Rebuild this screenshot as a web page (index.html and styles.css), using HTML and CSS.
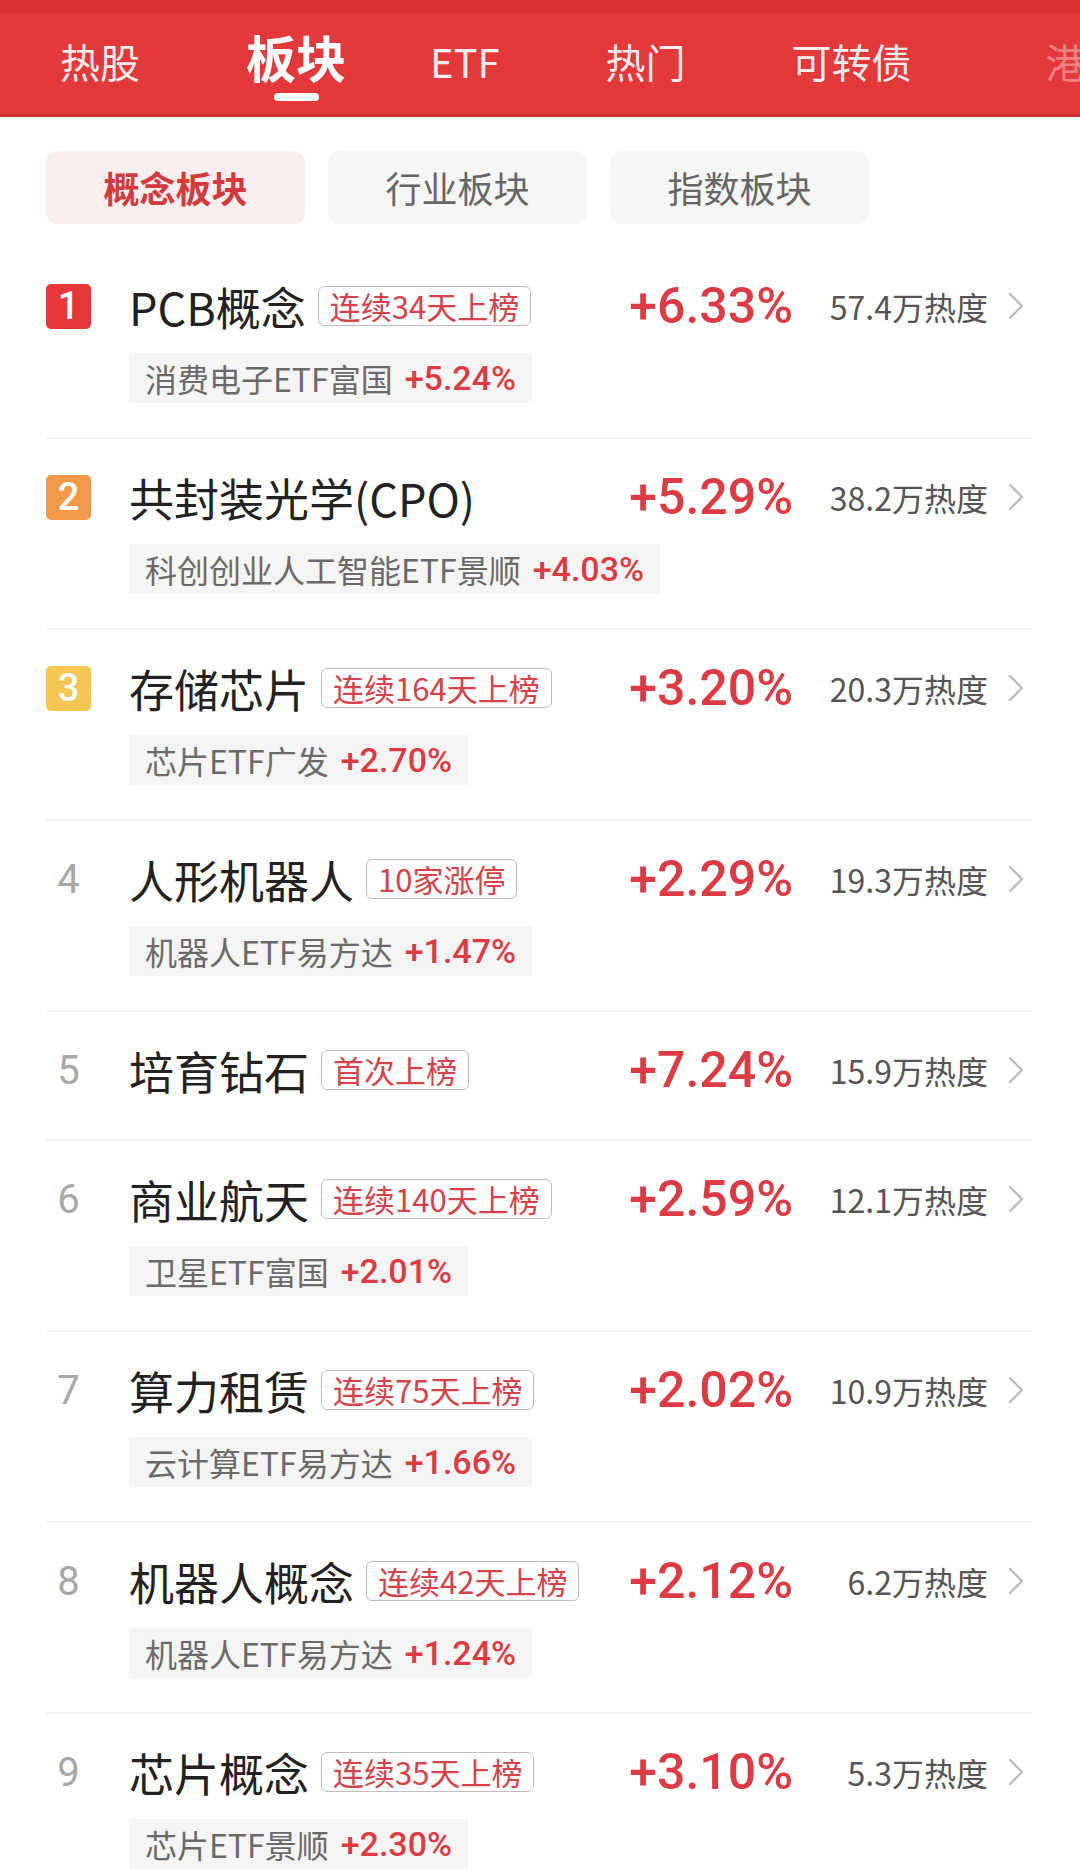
FILE: index.html
```html
<!DOCTYPE html>
<html lang="zh-CN">
<head>
    <meta charset="UTF-8">
    <meta name="viewport" content="width=device-width, initial-scale=1.0">
    <title>板块热榜</title>
    <link rel="stylesheet" href="styles.css">
</head>
<body>
    <div class="topbar">
        <div class="tab">热股</div>
        <div class="tab active">板块</div>
        <div class="tab tab-etf">ETF</div>
        <div class="tab">热门</div>
        <div class="tab">可转债</div>
        <div class="tab tab-fade">港</div>
    </div>

    <div class="segments">
        <div class="segment active">概念板块</div>
        <div class="segment">行业板块</div>
        <div class="segment">指数板块</div>
    </div>

    <div class="list">
        <div class="row">
            <div class="main">
                <span class="rank rank-1">1</span>
                <span class="name">PCB概念</span>
                <span class="tag">连续34天上榜</span>
                <span class="pct">+6.33%</span>
                <span class="heat">57.4万热度</span>
                <span class="arrow"><svg viewBox="0 0 18 30" width="18" height="30"><path d="M3 3 L15 15 L3 27" fill="none" stroke="#bdbdbd" stroke-width="2.4" stroke-linecap="round" stroke-linejoin="round"/></svg></span>
            </div>
            <div class="chip"><span class="chip-name">消费电子ETF富国</span><span class="chip-pct">+5.24%</span></div>
        </div>

        <div class="row">
            <div class="main">
                <span class="rank rank-2">2</span>
                <span class="name">共封装光学(CPO)</span>
                <span class="pct">+5.29%</span>
                <span class="heat">38.2万热度</span>
                <span class="arrow"><svg viewBox="0 0 18 30" width="18" height="30"><path d="M3 3 L15 15 L3 27" fill="none" stroke="#bdbdbd" stroke-width="2.4" stroke-linecap="round" stroke-linejoin="round"/></svg></span>
            </div>
            <div class="chip"><span class="chip-name">科创创业人工智能ETF景顺</span><span class="chip-pct">+4.03%</span></div>
        </div>

        <div class="row">
            <div class="main">
                <span class="rank rank-3">3</span>
                <span class="name">存储芯片</span>
                <span class="tag">连续164天上榜</span>
                <span class="pct">+3.20%</span>
                <span class="heat">20.3万热度</span>
                <span class="arrow"><svg viewBox="0 0 18 30" width="18" height="30"><path d="M3 3 L15 15 L3 27" fill="none" stroke="#bdbdbd" stroke-width="2.4" stroke-linecap="round" stroke-linejoin="round"/></svg></span>
            </div>
            <div class="chip"><span class="chip-name">芯片ETF广发</span><span class="chip-pct">+2.70%</span></div>
        </div>

        <div class="row">
            <div class="main">
                <span class="rank">4</span>
                <span class="name">人形机器人</span>
                <span class="tag">10家涨停</span>
                <span class="pct">+2.29%</span>
                <span class="heat">19.3万热度</span>
                <span class="arrow"><svg viewBox="0 0 18 30" width="18" height="30"><path d="M3 3 L15 15 L3 27" fill="none" stroke="#bdbdbd" stroke-width="2.4" stroke-linecap="round" stroke-linejoin="round"/></svg></span>
            </div>
            <div class="chip"><span class="chip-name">机器人ETF易方达</span><span class="chip-pct">+1.47%</span></div>
        </div>

        <div class="row">
            <div class="main">
                <span class="rank">5</span>
                <span class="name">培育钻石</span>
                <span class="tag">首次上榜</span>
                <span class="pct">+7.24%</span>
                <span class="heat">15.9万热度</span>
                <span class="arrow"><svg viewBox="0 0 18 30" width="18" height="30"><path d="M3 3 L15 15 L3 27" fill="none" stroke="#bdbdbd" stroke-width="2.4" stroke-linecap="round" stroke-linejoin="round"/></svg></span>
            </div>
        </div>

        <div class="row">
            <div class="main">
                <span class="rank">6</span>
                <span class="name">商业航天</span>
                <span class="tag">连续140天上榜</span>
                <span class="pct">+2.59%</span>
                <span class="heat">12.1万热度</span>
                <span class="arrow"><svg viewBox="0 0 18 30" width="18" height="30"><path d="M3 3 L15 15 L3 27" fill="none" stroke="#bdbdbd" stroke-width="2.4" stroke-linecap="round" stroke-linejoin="round"/></svg></span>
            </div>
            <div class="chip"><span class="chip-name">卫星ETF富国</span><span class="chip-pct">+2.01%</span></div>
        </div>

        <div class="row">
            <div class="main">
                <span class="rank">7</span>
                <span class="name">算力租赁</span>
                <span class="tag">连续75天上榜</span>
                <span class="pct">+2.02%</span>
                <span class="heat">10.9万热度</span>
                <span class="arrow"><svg viewBox="0 0 18 30" width="18" height="30"><path d="M3 3 L15 15 L3 27" fill="none" stroke="#bdbdbd" stroke-width="2.4" stroke-linecap="round" stroke-linejoin="round"/></svg></span>
            </div>
            <div class="chip"><span class="chip-name">云计算ETF易方达</span><span class="chip-pct">+1.66%</span></div>
        </div>

        <div class="row">
            <div class="main">
                <span class="rank">8</span>
                <span class="name">机器人概念</span>
                <span class="tag">连续42天上榜</span>
                <span class="pct">+2.12%</span>
                <span class="heat">6.2万热度</span>
                <span class="arrow"><svg viewBox="0 0 18 30" width="18" height="30"><path d="M3 3 L15 15 L3 27" fill="none" stroke="#bdbdbd" stroke-width="2.4" stroke-linecap="round" stroke-linejoin="round"/></svg></span>
            </div>
            <div class="chip"><span class="chip-name">机器人ETF易方达</span><span class="chip-pct">+1.24%</span></div>
        </div>

        <div class="row">
            <div class="main">
                <span class="rank">9</span>
                <span class="name">芯片概念</span>
                <span class="tag">连续35天上榜</span>
                <span class="pct">+3.10%</span>
                <span class="heat">5.3万热度</span>
                <span class="arrow"><svg viewBox="0 0 18 30" width="18" height="30"><path d="M3 3 L15 15 L3 27" fill="none" stroke="#bdbdbd" stroke-width="2.4" stroke-linecap="round" stroke-linejoin="round"/></svg></span>
            </div>
            <div class="chip"><span class="chip-name">芯片ETF景顺</span><span class="chip-pct">+2.30%</span></div>
        </div>
    </div>
</body>
</html>
```

FILE: styles.css
```css
body {
    margin: 0;
    background-color: #fff;
    font-family: "Noto Sans CJK SC", "Noto Sans", sans-serif;
    color: #222;
    overflow: hidden;
}
.topbar {
    height: 117px;
    box-sizing: border-box;
    padding: 8px 0 0 60px;
    display: flex;
    align-items: center;
    gap: 106px;
    background: linear-gradient(to bottom, #dc3034 0, #dc3034 14px, #e4393b 14px);
    border-bottom: 3px solid #cc3033;
    overflow: hidden;
    white-space: nowrap;
}
.tab {
    position: relative;
    flex-shrink: 0;
    font-size: 40px;
    line-height: 50px;
    color: rgba(255, 255, 255, 0.93);
}
.tab.active {
    font-size: 50px;
    line-height: 60px;
    font-weight: 700;
    color: #fff;
    margin-bottom: 10px;
}
.tab.active::after {
    content: "";
    position: absolute;
    left: 50%;
    top: 67px;
    width: 45px;
    height: 8px;
    margin-left: -22px;
    border-radius: 4px;
    background-color: #fff;
}
.tab-etf {
    margin-left: -22px;
}
.tab-fade {
    margin-left: 28px;
    opacity: 0.4;
}
.segments {
    display: flex;
    gap: 23px;
    padding: 34px 46px 0;
}
.segment {
    width: 259px;
    height: 73px;
    border-radius: 12px;
    background-color: #f6f6f6;
    color: #666;
    font-size: 36px;
    line-height: 73px;
    text-align: center;
}
.segment.active {
    background-color: #fbeeee;
    color: #d33a3f;
    font-weight: 700;
}
.list {
    margin-top: 24px;
    padding: 0 48px 0 46px;
}
.row {
    padding: 23px 0 34px;
    border-bottom: 2px solid #f3f3f3;
}
.main {
    display: flex;
    align-items: center;
    height: 70px;
    white-space: nowrap;
}
.rank {
    width: 45px;
    height: 45px;
    flex-shrink: 0;
    border-radius: 5px;
    font-family: Roboto, "Noto Sans", sans-serif;
    font-size: 40px;
    line-height: 45px;
    text-align: center;
    color: #a8a8a8;
}
.rank-1, .rank-2, .rank-3 {
    color: #fff;
    font-weight: 500;
    font-size: 38px;
}
.rank-1 { background-color: #e6383b; }
.rank-2 { background-color: #f29a4a; }
.rank-3 { background-color: #f6c653; }
.name {
    margin-left: 38px;
    font-size: 45px;
    color: #222;
}
.tag {
    margin-left: 12px;
    padding: 1px 11px;
    font-size: 31px;
    line-height: 36px;
    color: #d6424c;
    border: 1.5px solid #c6baba;
    border-radius: 6px;
}
.pct {
    margin-left: auto;
    font-family: Roboto, "Noto Sans", sans-serif;
    font-size: 50px;
    font-weight: 500;
    color: #dd3a44;
}
.heat {
    width: 195px;
    text-align: right;
    font-size: 32px;
    color: #555;
}
.arrow {
    width: 44px;
    box-sizing: border-box;
    padding-left: 19px;
    display: flex;
    align-items: center;
}
.chip {
    display: inline-flex;
    align-items: center;
    height: 50px;
    margin: 12px 0 0 83px;
    padding: 0 16px;
    background-color: #f5f5f5;
    white-space: nowrap;
}
.chip-name {
    font-size: 32px;
    color: #6a6a6a;
}
.chip-pct {
    margin-left: 12px;
    font-family: Roboto, "Noto Sans", sans-serif;
    font-size: 34px;
    font-weight: 500;
    color: #dd3a44;
}
```
